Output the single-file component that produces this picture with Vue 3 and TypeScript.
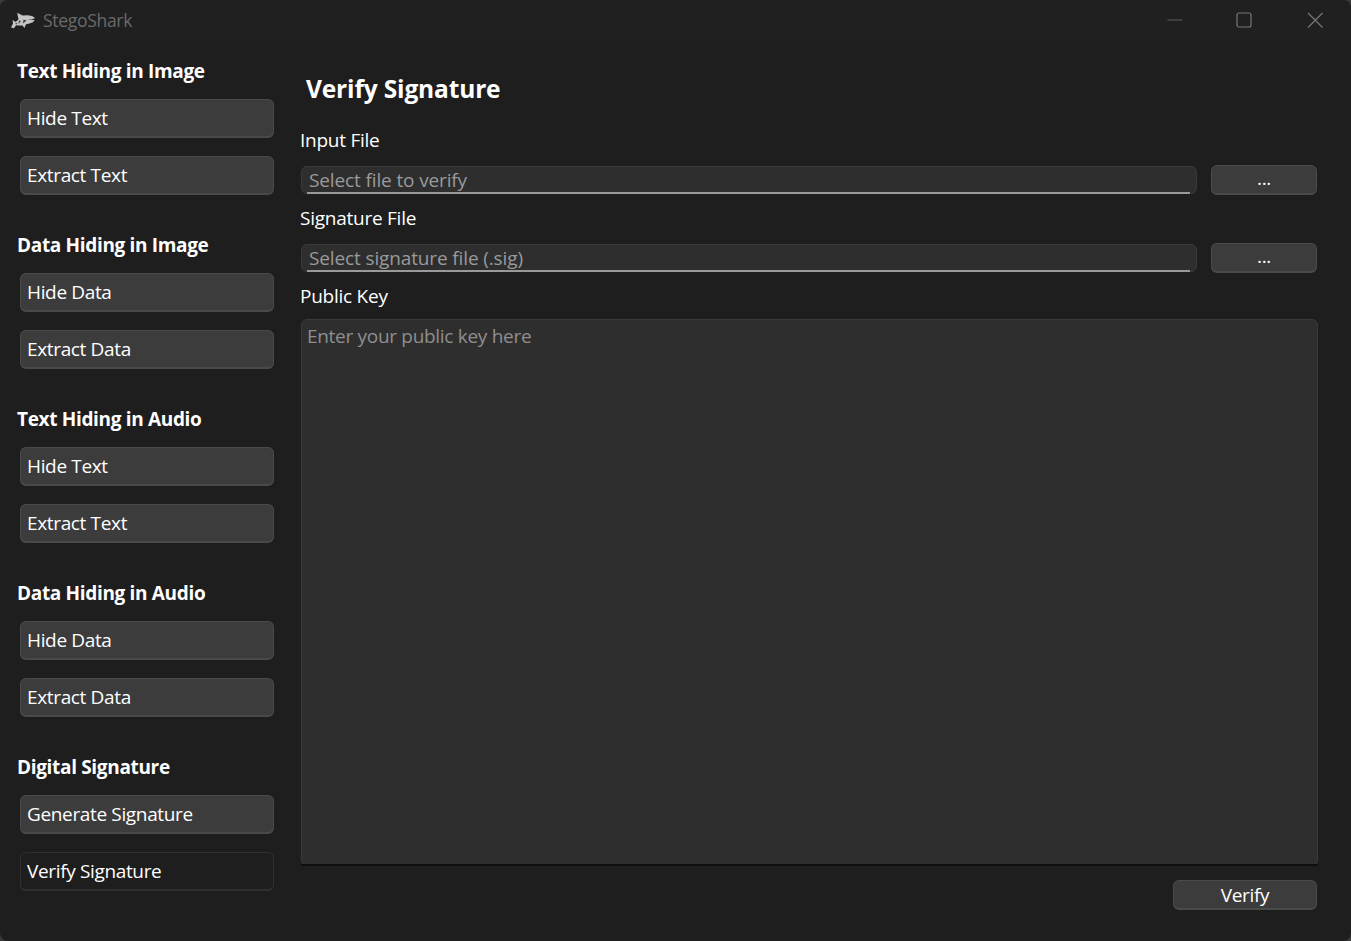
<script setup lang="ts">
interface Group { title: string; items: string[] }
const groups: Group[] = [
  { title: 'Text Hiding in Image', items: ['Hide Text', 'Extract Text'] },
  { title: 'Data Hiding in Image', items: ['Hide Data', 'Extract Data'] },
  { title: 'Text Hiding in Audio', items: ['Hide Text', 'Extract Text'] },
  { title: 'Data Hiding in Audio', items: ['Hide Data', 'Extract Data'] },
  { title: 'Digital Signature', items: ['Generate Signature', 'Verify Signature'] },
]
const active = 'Verify Signature'
</script>

<template>
  <div class="window">
    <header class="titlebar">
      <svg class="logo" width="26" height="20" viewBox="0 0 26 20">
        <path fill="#c4c4c4" d="M1 17.5 L3 13.5 L2.6 10 L5.6 12 L8.5 9.4 L7.2 2.8 L12.5 5.6 L17.5 5.2 L22 6 L25.2 8 L22 9.2 L17 9.6 L24.8 10 L22.5 12.5 L18.5 13.8 L16 14.2 L14.5 18 L12.5 15.4 L8.5 15.6 L6 15.2 L4 18.2 Z" />
        <path fill="#3a3a3a" d="M13.5 9.5 L16.5 10.5 L13 13.5 Z M9 10.5 L11 11 L8.5 14 Z M5 13.5 L7.5 13 L6.5 14.6 Z" />
      </svg>
      <span class="app-name">StegoShark</span>
      <div class="controls">
        <svg class="min" width="16" height="16" viewBox="0 0 16 16"><path d="M0.5 8H15.5" stroke="#5f5f5f" stroke-width="1" /></svg>
        <svg width="16" height="16" viewBox="0 0 16 16"><rect x="1" y="1" width="14" height="14" rx="2" fill="none" stroke="#777" stroke-width="1.2" /></svg>
        <svg width="16" height="16" viewBox="0 0 16 16"><path d="M1 1L15.5 15.5M15.5 1L1 15.5" stroke="#777" stroke-width="1.2" /></svg>
      </div>
    </header>
    <div class="body">
      <aside class="sidebar">
        <section v-for="g in groups" :key="g.title" class="group">
          <h2 class="group-title">{{ g.title }}</h2>
          <div class="nav-list">
            <div v-for="item in g.items" :key="item" class="nav-btn" :class="{ active: item === active }">{{ item }}</div>
          </div>
        </section>
      </aside>
      <main class="main">
        <h1 class="page-title">Verify Signature</h1>
        <label class="label first">Input File</label>
        <div class="file-row">
          <div class="line-edit">Select file to verify</div>
          <div class="browse">...</div>
        </div>
        <label class="label">Signature File</label>
        <div class="file-row">
          <div class="line-edit">Select signature file (.sig)</div>
          <div class="browse">...</div>
        </div>
        <label class="label">Public Key</label>
        <div class="text-area">Enter your public key here</div>
        <div class="footer"><div class="verify">Verify</div></div>
      </main>
    </div>
  </div>
</template>

<style>
html, body { margin: 0; background: #3a3a3a; }
</style>

<style scoped>
.window {
  width: 1351px;
  height: 941px;
  box-sizing: border-box;
  display: flex;
  flex-direction: column;
  overflow: hidden;
  background: #1e1e1e;
  border-radius: 8px;
  color: #fff;
  font-family: "Open Sans", "Noto Sans", sans-serif;
  font-size: 19px;
  letter-spacing: -0.35px;
}
.titlebar {
  height: 40px;
  flex: none;
  display: flex;
  align-items: center;
  padding-left: 10px;
  background: #202020;
}
.logo { margin-right: 7px; }
.app-name { color: #6a6a6a; font-size: 17.5px; letter-spacing: -0.3px; }
.controls { margin-left: auto; display: flex; align-items: center; gap: 55px; padding-right: 28px; }
.min { margin-right: -2px; }
.body { flex: 1; display: flex; min-height: 0; }
.sidebar { width: 300px; flex: none; padding: 18px 0 0 17px; box-sizing: border-box; display: flex; flex-direction: column; gap: 37px; }
.group-title { margin: 0 0 15px; height: 26px; line-height: 26px; font-size: 19px; font-weight: 700; letter-spacing: -0.33px; }
.nav-list { display: flex; flex-direction: column; gap: 18px; margin-left: 3px; }
.nav-btn {
  width: 254px; height: 39px; box-sizing: border-box;
  padding: 0 6px; line-height: 37px;
  background: #3c3c3c;
  border: 1px solid #4a4a4a; border-bottom-width: 2px;
  border-radius: 6px;
}
.nav-btn.active { background: #1e1e1e; border-color: #303030; color: #fff; }
.main { width: 1018px; flex: none; display: flex; flex-direction: column; }
.page-title { margin: 32px 0 0 6px; height: 34px; line-height: 34px; font-size: 24.5px; font-weight: 700; letter-spacing: -0.15px; }
.label { height: 26px; line-height: 26px; margin-top: 10px; letter-spacing: -0.25px; }
.label.first { margin-top: 21px; }
.file-row { display: flex; justify-content: space-between; margin-top: 12px; height: 30px; padding-right: 1px; }
.line-edit {
  position: relative;
  margin: 1px 0 0 1px;
  width: 896px; height: 28px; box-sizing: border-box;
  padding: 0 7px; line-height: 27px;
  color: #9a9a9a;
  letter-spacing: -0.13px;
  background: #2e2e2e;
  border: 1px solid #3a3a3a;
  border-radius: 6px;
}
.line-edit::after {
  content: "";
  position: absolute;
  left: 5px; right: 6px; bottom: -1px;
  height: 2px;
  background: #9a9a9a;
}
.browse {
  width: 106px; height: 30px; box-sizing: border-box;
  text-align: center; line-height: 25px;
  background: #3c3c3c;
  border: 1px solid #4a4a4a; border-bottom-width: 2px;
  border-radius: 6px;
}
.text-area {
  position: relative;
  margin: 10px 0 0 1px;
  height: 547px; box-sizing: border-box;
  padding: 2px 5px;
  line-height: 28px;
  letter-spacing: -0.3px;
  color: #8e8e8e;
  background: #2e2e2e;
  border: 1px solid #3a3a3a;
  border-radius: 6px;
}
.text-area::after {
  content: "";
  position: absolute;
  left: -1px; right: -1px; bottom: -1px;
  height: 2px;
  background: #0f0f0f;
}
.footer { display: flex; justify-content: flex-end; margin-top: 14px; padding-right: 1px; }
.verify {
  width: 144px; height: 30px; box-sizing: border-box;
  text-align: center; line-height: 28px;
  background: #3c3c3c;
  border: 1px solid #4a4a4a; border-bottom-width: 2px;
  border-radius: 6px;
}
</style>
